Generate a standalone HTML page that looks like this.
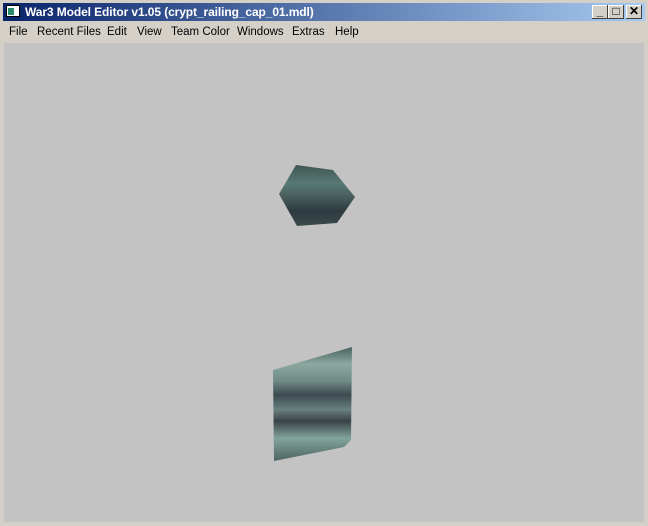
<!DOCTYPE html><html><head><style>
body{margin:0;width:648px;height:526px;overflow:hidden;background:#d4d0c8;font-family:"Liberation Sans",sans-serif;position:relative}
.tb{position:absolute;left:3px;top:3px;width:642px;height:18px;background:linear-gradient(90deg,#0a246a,#a6caf0)}
.tt{position:absolute;left:22px;top:3px;color:#fff;font-weight:bold;font-size:12px;line-height:13px;letter-spacing:-0.1px}
.ic{position:absolute;left:3px;top:2px;width:14px;height:12px;background:#fff;border:1px solid #000;box-sizing:border-box}
.ic:after{content:"";position:absolute;left:1px;top:2px;width:6px;height:7px;background:#2a8a6a}
.btn{position:absolute;top:5px;width:16px;height:14px;background:#d4d0c8;box-shadow:inset -1px -1px #404040,inset 1px 1px #fff;font-size:12px;text-align:center;line-height:13px;font-weight:bold}
.menu span{position:absolute;top:22px;height:20px;font-size:11.5px;line-height:20px;white-space:nowrap}
.client{position:absolute;left:4px;top:43px;width:640px;height:479px;background:#c3c3c3}
</style></head><body>
<div class="tb"><div class="ic"></div><div class="tt">War3 Model Editor v1.05 (crypt_railing_cap_01.mdl)</div></div>
<div class="btn" style="left:592px">_</div><div class="btn" style="left:608px">□</div><div class="btn" style="left:626px">✕</div>
<div class="menu"><span style="left:9px">File</span><span style="left:37px">Recent Files</span><span style="left:107px">Edit</span><span style="left:137px">View</span><span style="left:171px">Team Color</span><span style="left:237px">Windows</span><span style="left:292px">Extras</span><span style="left:335px">Help</span></div>
<div class="client"></div>
<svg style="position:absolute;left:0;top:0" width="648" height="526">
<defs><linearGradient id="a" x1="0" y1="0" x2="0" y2="1"><stop offset="0" stop-color="#3e5552"/><stop offset=".3" stop-color="#587a74"/><stop offset=".5" stop-color="#4a605e"/><stop offset=".75" stop-color="#2e3a40"/><stop offset="1" stop-color="#3a4a4a"/></linearGradient>
<linearGradient id="b" x1="0" y1="0" x2="0" y2="1"><stop offset="0" stop-color="#4a625e"/><stop offset=".15" stop-color="#8aa8a0"/><stop offset=".3" stop-color="#6f8a85"/><stop offset=".42" stop-color="#3c4a50"/><stop offset=".55" stop-color="#68807e"/><stop offset=".65" stop-color="#3a4248"/><stop offset=".8" stop-color="#80a49a"/><stop offset="1" stop-color="#4e6462"/></linearGradient></defs>
<polygon points="296,165 333,170 355,197 337,223 297,226 279,194" fill="url(#a)"/>
<polygon points="273,370 352,347 351,440 344,447 274,461" fill="url(#b)"/>
</svg>
</body></html>
